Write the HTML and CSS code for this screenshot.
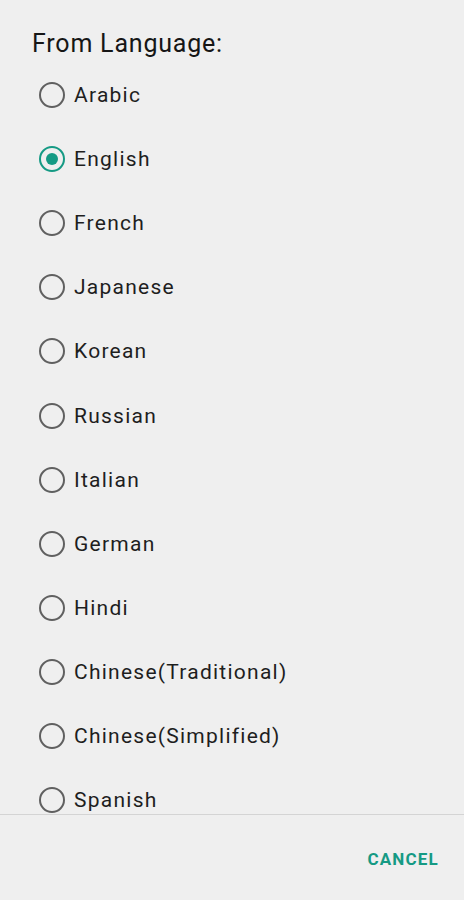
FILE: index.html
```html
<!DOCTYPE html>
<html>
<head>
<meta charset="utf-8">
<link rel="stylesheet" href="styles.css">
</head>
<body>
<div class="dialog">
  <h1 class="title">From Language:</h1>
  <ul class="list">
    <li class="row"><span class="radio"></span><span class="label">Arabic</span></li>
    <li class="row"><span class="radio checked"></span><span class="label">English</span></li>
    <li class="row"><span class="radio"></span><span class="label">French</span></li>
    <li class="row"><span class="radio"></span><span class="label">Japanese</span></li>
    <li class="row"><span class="radio"></span><span class="label">Korean</span></li>
    <li class="row"><span class="radio"></span><span class="label">Russian</span></li>
    <li class="row"><span class="radio"></span><span class="label">Italian</span></li>
    <li class="row"><span class="radio"></span><span class="label">German</span></li>
    <li class="row"><span class="radio"></span><span class="label">Hindi</span></li>
    <li class="row"><span class="radio"></span><span class="label">Chinese(Traditional)</span></li>
    <li class="row"><span class="radio"></span><span class="label">Chinese(Simplified)</span></li>
    <li class="row"><span class="radio"></span><span class="label">Spanish</span></li>
  </ul>
  <div class="footer">
    <button class="btn">CANCEL</button>
  </div>
</div>
</body>
</html>
```
FILE: styles.css
```css
html, body {
  margin: 0;
  padding: 0;
  background: #efefef;
}
.dialog {
  width: 464px;
  height: 900px;
  display: flex;
  flex-direction: column;
  font-family: Roboto, "Noto Sans", sans-serif;
  color: #1e1e1e;
}
.title {
  margin: 0;
  padding: 29px 0 0 32px;
  font-size: 25px;
  font-weight: 400;
  line-height: 30px;
  letter-spacing: 0.8px;
  color: #161616;
}
.list {
  list-style: none;
  margin: 0;
  padding: 4px 0 0 0;
  height: 755px;
  box-sizing: border-box;
  overflow: hidden;
  display: flex;
  flex-direction: column;
  flex: none;
}
.row {
  height: 64.1px;
  flex: none;
  display: flex;
  align-items: center;
  padding-left: 39px;
  box-sizing: border-box;
}
.radio {
  width: 26px;
  height: 26px;
  box-sizing: border-box;
  border: 2.5px solid #606060;
  border-radius: 50%;
  flex: none;
  display: flex;
  align-items: center;
  justify-content: center;
}
.radio.checked {
  border-color: #159a84;
}
.radio.checked::after {
  content: "";
  width: 12px;
  height: 12px;
  border-radius: 50%;
  background: #159a84;
}
.label {
  margin-left: 9px;
  font-size: 21px;
  letter-spacing: 1.25px;
  color: #1e1e1e;
}
.footer {
  border-top: 1px solid #d4d4d4;
  flex: 1;
  display: flex;
  justify-content: flex-end;
  align-items: flex-start;
  padding: 34px 25px 0 0;
}
.btn {
  background: none;
  border: 0;
  padding: 0;
  font-family: Roboto, "Noto Sans", sans-serif;
  font-weight: 700;
  font-size: 17px;
  letter-spacing: 1.2px;
  color: #159a84;
  line-height: 20px;
}
```
